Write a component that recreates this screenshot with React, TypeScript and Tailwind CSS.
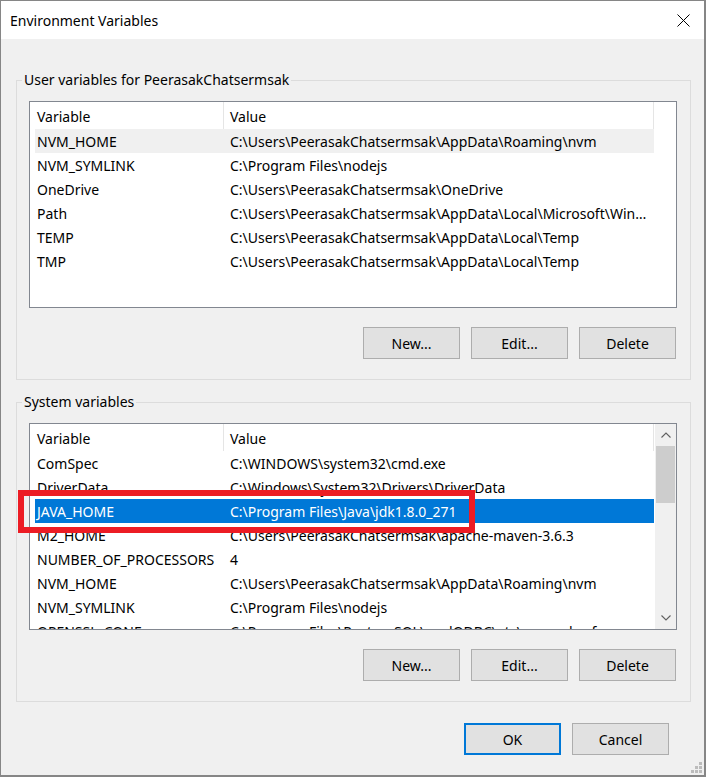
type Row = { name: string; value: string; state?: "hover" | "selected" };

const userVars: Row[] = [
  { name: "NVM_HOME", value: "C:\\Users\\PeerasakChatsermsak\\AppData\\Roaming\\nvm", state: "hover" },
  { name: "NVM_SYMLINK", value: "C:\\Program Files\\nodejs" },
  { name: "OneDrive", value: "C:\\Users\\PeerasakChatsermsak\\OneDrive" },
  { name: "Path", value: "C:\\Users\\PeerasakChatsermsak\\AppData\\Local\\Microsoft\\WindowsApps;" },
  { name: "TEMP", value: "C:\\Users\\PeerasakChatsermsak\\AppData\\Local\\Temp" },
  { name: "TMP", value: "C:\\Users\\PeerasakChatsermsak\\AppData\\Local\\Temp" },
];

const systemVars: Row[] = [
  { name: "ComSpec", value: "C:\\WINDOWS\\system32\\cmd.exe" },
  { name: "DriverData", value: "C:\\Windows\\System32\\Drivers\\DriverData" },
  { name: "JAVA_HOME", value: "C:\\Program Files\\Java\\jdk1.8.0_271", state: "selected" },
  { name: "M2_HOME", value: "C:\\Users\\PeerasakChatsermsak\\apache-maven-3.6.3" },
  { name: "NUMBER_OF_PROCESSORS", value: "4" },
  { name: "NVM_HOME", value: "C:\\Users\\PeerasakChatsermsak\\AppData\\Roaming\\nvm" },
  { name: "NVM_SYMLINK", value: "C:\\Program Files\\nodejs" },
  { name: "OPENSSL_CONF", value: "C:\\Program Files\\PostgreSQL\\psqlODBC\\etc\\openssl.cnf" },
];

function VarRow({ row }: { row: Row }) {
  const tone =
    row.state === "selected"
      ? "bg-[#0078d7] text-white"
      : row.state === "hover"
        ? "bg-[#f0f0f0]"
        : "";
  return (
    <div className={`ml-[5px] flex h-[24px] w-[619px] shrink-0 items-center ${tone}`}>
      <div className="w-[189px] shrink-0 truncate pl-[2px]">{row.name}</div>
      <div className="w-[430px] shrink-0 truncate pl-[6px] pr-[4px]">{row.value}</div>
    </div>
  );
}

function Chevron({ down }: { down?: boolean }) {
  return (
    <svg width="10" height="6" viewBox="0 0 10 6" className={down ? "rotate-180" : ""}>
      <path d="M0.5 5.5 L5 1 L9.5 5.5" fill="none" stroke="#606060" strokeWidth="1.1" />
    </svg>
  );
}

function Scrollbar() {
  return (
    <div className="flex w-[21px] shrink-0 flex-col bg-[#f0f0f0]">
      <div className="flex h-[22px] items-center justify-center">
        <Chevron />
      </div>
      <div className="mx-[1px] h-[57px] bg-[#cdcdcd]" />
      <div className="flex-1" />
      <div className="flex h-[22px] items-center justify-center">
        <Chevron down />
      </div>
    </div>
  );
}

function VarList({ rows, scroll }: { rows: Row[]; scroll?: boolean }) {
  return (
    <div className="flex h-[207px] w-[648px] overflow-hidden border border-[#828790] bg-white">
      <div className="flex min-w-0 flex-1 flex-col">
        <div className="flex h-[27px] shrink-0">
          <div className="flex w-[194px] items-center border-r border-[#e5e5e5] pl-[7px] pt-[2px]">
            Variable
          </div>
          <div className="flex w-[430px] items-center border-r border-[#e5e5e5] pl-[6px] pt-[2px]">
            Value
          </div>
        </div>
        {rows.map((r) => (
          <VarRow key={r.name} row={r} />
        ))}
      </div>
      {scroll && <Scrollbar />}
    </div>
  );
}

function Btn({ children, primary }: { children: React.ReactNode; primary?: boolean }) {
  return (
    <button
      type="button"
      className={`h-[32px] w-[97px] bg-[#e1e1e1] text-black ${
        primary ? "border-2 border-[#0078d7]" : "border border-[#adadad]"
      }`}
    >
      {children}
    </button>
  );
}

function Group({ label, rows, scroll }: { label: string; rows: Row[]; scroll?: boolean }) {
  return (
    <fieldset className="ml-[15px] w-[675px] border border-[#dcdcdc] pb-[20px] pl-[5px]">
      <legend className="px-[2px] leading-[20px]">{label}</legend>
      <div className="ml-[7px] mt-[11px] w-[648px]">
        <VarList rows={rows} scroll={scroll} />
        <div className="mt-[19px] flex justify-end gap-[11px] pr-[1px]">
          <Btn>New...</Btn>
          <Btn>Edit...</Btn>
          <Btn>Delete</Btn>
        </div>
      </div>
    </fieldset>
  );
}

export default function App() {
  return (
    <div className="relative flex h-[777px] w-[706px] flex-col border-b-2 border-l border-r-2 border-t border-[#868686] bg-[#f0f0f0] font-['Segoe_UI','Noto_Sans',sans-serif] text-[14px] text-black">
      <div className="flex h-[38px] shrink-0 items-center justify-between bg-white pl-[9px] pr-[14px]">
        <span>Environment Variables</span>
        <svg width="13" height="13" viewBox="0 0 13 13">
          <path d="M0.5 0.5 L12.5 12.5 M12.5 0.5 L0.5 12.5" stroke="#000" strokeWidth="1" />
        </svg>
      </div>

      <div className="mt-[31px]">
        <Group label="User variables for PeerasakChatsermsak" rows={userVars} />
      </div>
      <div className="mt-[12px]">
        <Group label="System variables" rows={systemVars} scroll />
      </div>

      <div className="mt-[21px] flex justify-end gap-[11px] pr-[35px]">
        <Btn primary>OK</Btn>
        <Btn>Cancel</Btn>
      </div>

      {/* annotation box around JAVA_HOME */}
      <div className="absolute left-[17px] top-[489px] h-[43px] w-[457px] border-[6px] border-[#ec1c24]" />

      {/* resize grip */}
      <div className="absolute bottom-[2px] right-[2px] grid grid-cols-3 gap-[1px]">
        <span className="h-[3px] w-[3px]" />
        <span className="h-[3px] w-[3px]" />
        <span className="h-[3px] w-[3px] bg-[#bcbcbc]" />
        <span className="h-[3px] w-[3px]" />
        <span className="h-[3px] w-[3px] bg-[#bcbcbc]" />
        <span className="h-[3px] w-[3px] bg-[#bcbcbc]" />
        <span className="h-[3px] w-[3px] bg-[#bcbcbc]" />
        <span className="h-[3px] w-[3px] bg-[#bcbcbc]" />
        <span className="h-[3px] w-[3px] bg-[#bcbcbc]" />
      </div>
    </div>
  );
}
